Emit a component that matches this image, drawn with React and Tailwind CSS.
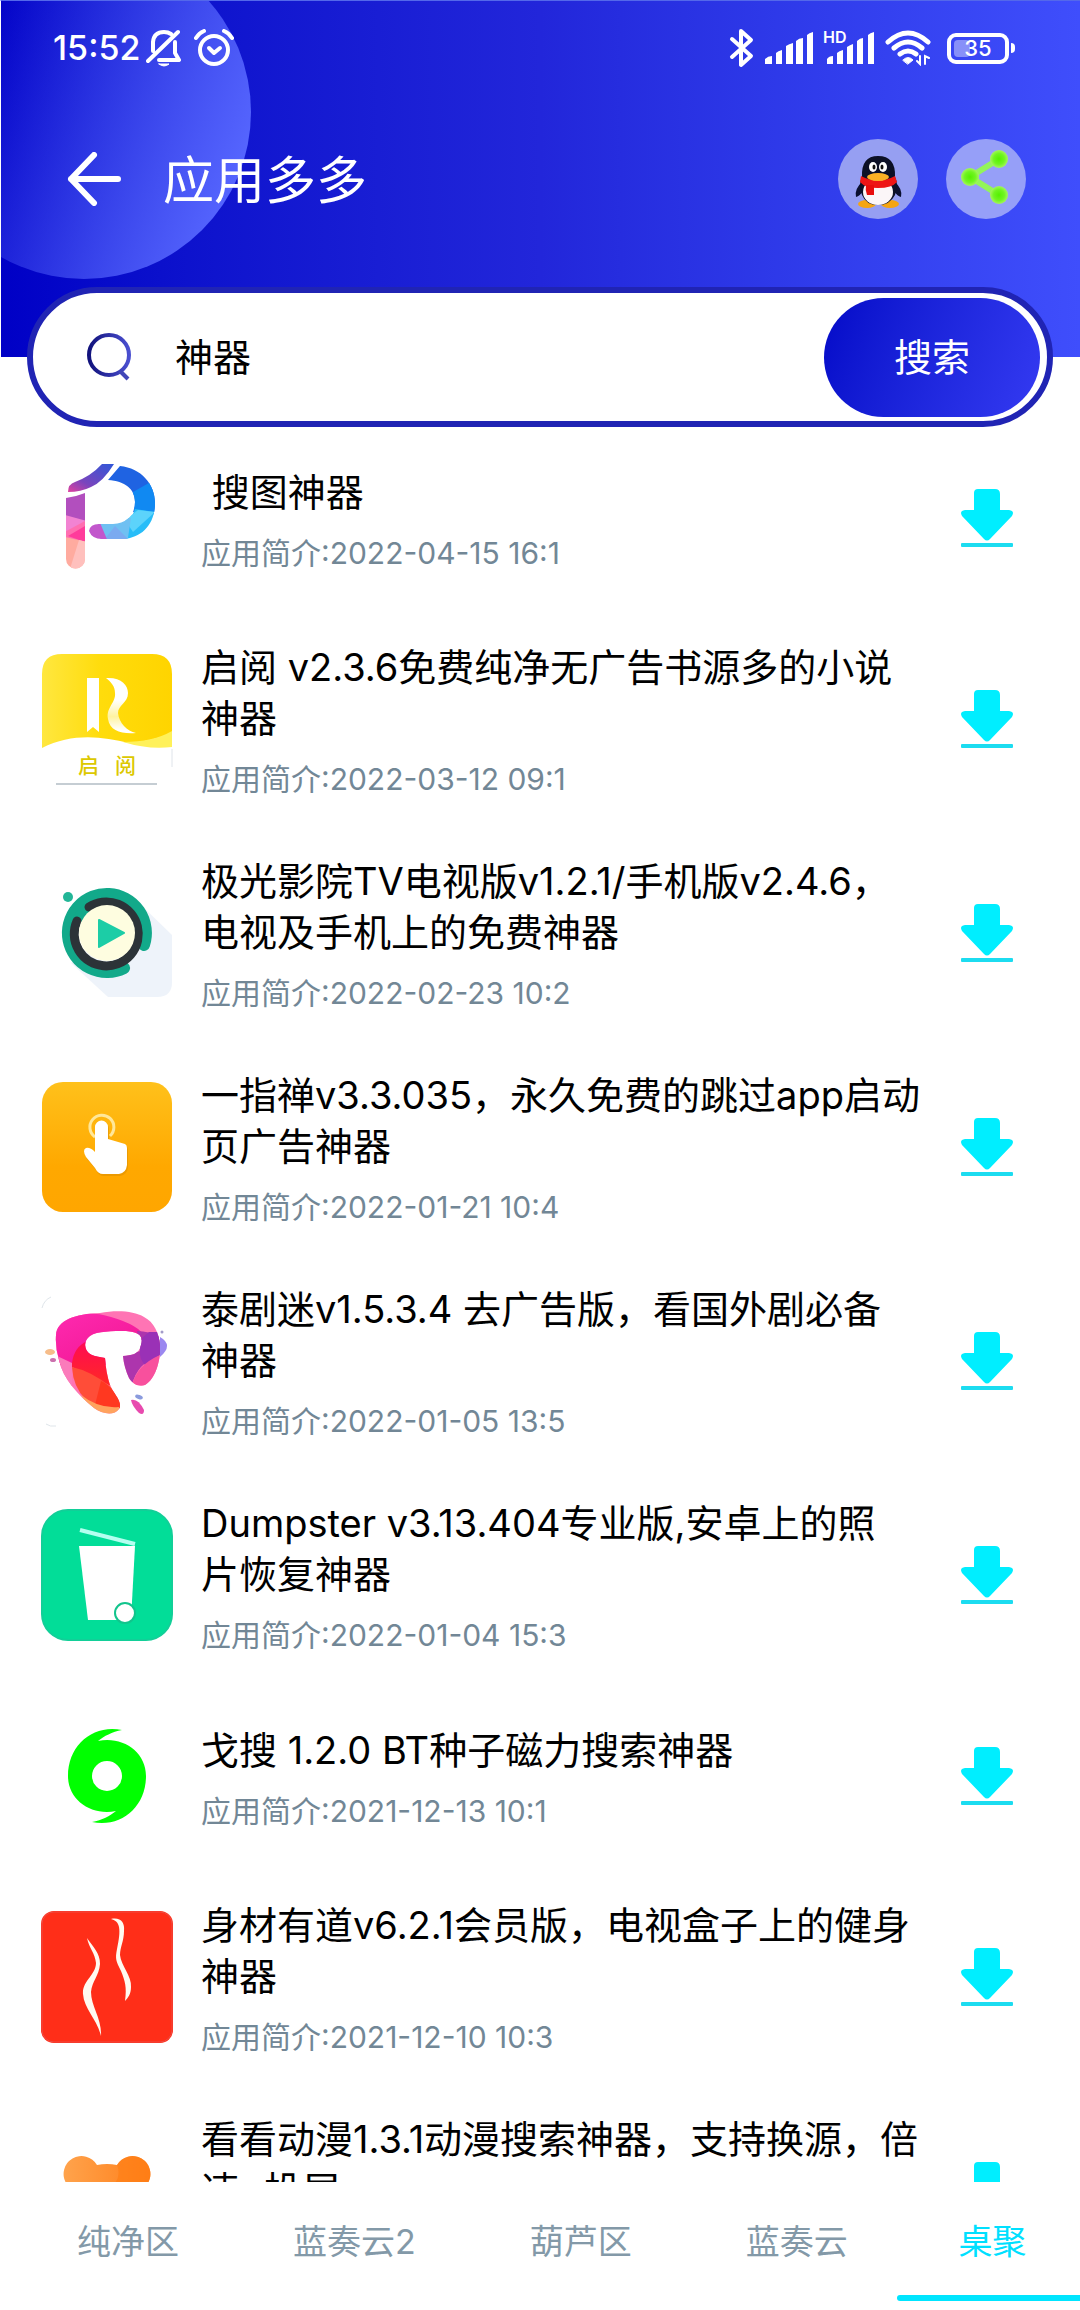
import React, { useState } from 'react'

const SearchImageIcon = () => (
  <svg viewBox="0 0 132 132" className="w-full h-full">
    <defs>
      <linearGradient id="pTop" x1="0" y1="1" x2="1" y2="0">
        <stop offset="0" stopColor="#e0419f" />
        <stop offset="0.35" stopColor="#7a45bd" />
        <stop offset="1" stopColor="#2f57d8" />
      </linearGradient>
      <clipPath id="pBar">
        <path d="M25 46Q34 45 44 41V107a9.500 9.500 0 0 1-19 0Z" />
      </clipPath>
      <clipPath id="pBowl">
        <path d="M67 28L79 14C100 16 114 32 114 51C114 72 101 86 82 87H61Q51 87 48 79Q49 72 58 72H72C87 71 94 62 94 50C94 37 84 29 67 28Z" />
      </clipPath>
    </defs>
    <path d="M27 40Q27 32 34 30Q50 24 61 12H73Q62 30 50 35Q40 40 27 40Z" fill="url(#pTop)" />
    <g clipPath="url(#pBar)">
      <path d="M20 38H50V70H20Z" fill="#b24fbe" />
      <path d="M20 62L50 70V90H20Z" fill="#f283d2" />
      <path d="M20 82L44 69V92L20 84Z" fill="#ff6fb0" />
      <path d="M27 84L44 74V90Z" fill="#ff3c9b" />
      <path d="M20 84L50 91V120H20Z" fill="#ffab9f" />
      <path d="M38 88L50 91V120H28Z" fill="#ffc0bd" />
    </g>
    <g clipPath="url(#pBowl)">
      <path d="M60 10H120V60H60Z" fill="#1f63e2" />
      <path d="M92 40L120 24V64L92 58Z" fill="#1089f2" />
      <path d="M94 57L120 61V92H80Z" fill="#27bdf8" />
      <path d="M97 58L114 60L92 80L84 68Z" fill="#5cd3fb" />
      <path d="M56 66H90L86 92H60Z" fill="#6fc0f2" />
      <path d="M74 74L92 92H60Z" fill="#7baaf0" />
      <path d="M46 66H57L68 92H46Z" fill="#c257cc" />
    </g>
  </svg>
)

const QiyueIcon = () => (
  <svg viewBox="0 0 132 132" className="w-full h-full">
    <defs>
      <linearGradient id="qyBg" x1="0" y1="0" x2="1" y2="0">
        <stop offset="0" stopColor="#ffe73f" />
        <stop offset="0.45" stopColor="#ffdc0c" />
        <stop offset="1" stopColor="#ffd400" />
      </linearGradient>
      <linearGradient id="qyTail" x1="0" y1="0" x2="0" y2="1">
        <stop offset="0.4" stopColor="#fff" />
        <stop offset="0.7" stopColor="#fff3a0" />
        <stop offset="0.95" stopColor="#fff" />
      </linearGradient>
    </defs>
    <path d="M1 95V21Q1 1 21 1H111Q131 1 131 21V80Q112 88 88 90C60 83 30 80 1 95Z" fill="url(#qyBg)" />
    <path d="M82 89Q112 89 131 78V94Q108 97 82 89Z" fill="#fff15a" />
    <path d="M46 25H58V79L52 74L46 79Z" fill="#fff" />
    <path d="M65 25C80 24 87 32 87 40C87 50 77 52 77 60C78 70 86 78 95 80C80 81 69 78 67 66C65 54 75 50 74 40C74 33 70 29 65 25Z" fill="url(#qyTail)" />
    <g fill="#dcc800" fontSize="21" fontFamily="'Noto Sans CJK SC', sans-serif" fontWeight="500">
      <text x="37" y="120">启</text>
      <text x="74" y="120">阅</text>
    </g>
    <path d="M15 131H116" stroke="#c5cdd3" strokeWidth="2" />
    <path d="M131 96V114" stroke="#dfe4ea" strokeWidth="1" />
  </svg>
)

const CinemaIcon = () => (
  <svg viewBox="0 0 132 132" className="w-full h-full">
    <path d="M100 38L131 68V115Q131 130 116 130H67L30 96Z" fill="#eef3fa" />
    <circle cx="27" cy="30" r="5" fill="#22b697" />
    <g fill="none" strokeLinecap="round">
      <path d="M83 101A39 39 0 1 1 103 78" stroke="#12a98a" strokeWidth="12" />
      <path d="M36 54A32 32 0 0 1 48 40" stroke="#12a98a" strokeWidth="10" strokeLinecap="butt" />
      <path d="M48 40A32 32 0 1 1 36 54" stroke="#2c3338" strokeWidth="9" />
    </g>
    <circle cx="66" cy="66" r="28" fill="#fefde0" />
    <path d="M58 53L83 66L58 80Z" fill="#1ccda6" stroke="#1ccda6" strokeWidth="2" strokeLinejoin="round" />
  </svg>
)

const TapIcon = () => (
  <svg viewBox="0 0 132 132" className="w-full h-full">
    <defs>
      <linearGradient id="tapBg" x1="0" y1="0" x2="0" y2="1">
        <stop offset="0" stopColor="#ffc11b" />
        <stop offset="0.65" stopColor="#ffa800" />
        <stop offset="1" stopColor="#ffa600" />
      </linearGradient>
    </defs>
    <rect x="1" y="1" width="130" height="130" rx="21" fill="url(#tapBg)" />
    <path d="M54 56A12 12 0 1 1 69 55" fill="none" stroke="#ffe79a" strokeWidth="3" />
    <path
      d="M54 46a6.500 6.500 0 0 1 13 0V58L84 63Q86 64 86 67V84Q85 92 78 93H62Q57 93 54 87L45 76Q41 69 45 67Q49 66 54 71Z"
      transform="translate(1 2)"
      fill="#d98b00"
      opacity="0.5"
    />
    <path d="M54 46a6.500 6.500 0 0 1 13 0V58L84 63Q86 64 86 67V84Q85 92 78 93H62Q57 93 54 87L45 76Q41 69 45 67Q49 66 54 71Z" fill="#fff" />
  </svg>
)

const ThaiDramaIcon = () => (
  <svg viewBox="0 0 132 132" className="w-full h-full">
    <defs>
      <clipPath id="thai">
        <path d="M15 40C16 25 34 19 59 18C76 15 93 16 103 22C113 27 118 38 119 50C120 64 115 84 104 90C98 93 91 88 88 83Q83 72 82 61C90 60 98 60 100 50C103 40 97 37 85 36C72 36 56 36 49 41C42 46 43 55 49 59C54 62 60 62 64 63Q65 78 69 90C73 99 82 107 78 114C73 121 61 119 53 113C37 100 22 84 18 65Q14 52 15 40Z" />
      </clipPath>
      <linearGradient id="thaiPink" x1="0" y1="0" x2="1" y2="1">
        <stop offset="0" stopColor="#ff2bb2" />
        <stop offset="1" stopColor="#f01590" />
      </linearGradient>
      <linearGradient id="thaiRed" x1="0" y1="0" x2="0" y2="1">
        <stop offset="0" stopColor="#ff0a55" />
        <stop offset="1" stopColor="#ff2a22" />
      </linearGradient>
    </defs>
    <g clipPath="url(#thai)">
      <path d="M0 0H132V132H0Z" fill="#ff74b4" />
      <path d="M0 40Q30 10 70 22Q98 30 104 42L70 70H10Z" fill="url(#thaiPink)" />
      <path d="M14 60L31 68V92Q20 80 14 60Z" fill="#fb7bbb" />
      <path d="M31 68Q33 52 46 46L70 62L72 92L31 72Z" fill="url(#thaiRed)" />
      <path d="M31 72Q50 76 70 92L82 114Q60 114 45 105Q32 92 31 72Z" fill="#ff4d38" />
      <path d="M60 86Q70 90 82 110V114L54 110Z" fill="#ff3820" />
      <path d="M40 100Q58 114 78 112V122H54Z" fill="#ffa35e" />
      <path d="M96 36Q108 36 119 42V60Q96 68 91 90L80 84V60L100 56Z" fill="#ad35ad" />
      <path d="M100 44L108 37H119V60L104 70Q96 62 100 44Z" fill="#9a31b6" />
      <path d="M119 60Q96 70 91 90H110Q122 78 119 60Z" fill="#f8509d" />
    </g>
    <path d="M119 42Q133 50 119 62Z" fill="#9b88f0" />
    <circle cx="121" cy="37" r="1.500" fill="#a39bc9" />
    <ellipse cx="9" cy="57" rx="5" ry="3" fill="#f6bd8a" />
    <ellipse cx="12" cy="65" rx="3" ry="2" fill="#cb70ad" />
    <ellipse cx="98" cy="102" rx="4" ry="2" transform="rotate(20 98 102)" fill="#8b9bdd" />
    <path d="M90 105Q97 103 103 115Q103 121 98 118Q91 111 90 105Z" fill="#e84aae" />
    <path d="M1 13Q3 5 10 2M5 129Q9 132 15 131" fill="none" stroke="#dfe5ea" strokeWidth="1" />
  </svg>
)

const DumpsterIcon = () => (
  <svg viewBox="0 0 132 132" className="w-full h-full">
    <rect x="1" y="1" width="130" height="130" rx="26" fill="#02dd98" stroke="#12cf98" strokeWidth="2" />
    <path d="M39 21L94 35" stroke="#b5fff0" strokeWidth="4" />
    <path d="M38 37H94L90 111H47Z" fill="#fff" />
    <circle cx="84" cy="104" r="10" fill="#fff" stroke="#12c48c" strokeWidth="2" />
  </svg>
)

const GesouIcon = () => (
  <svg viewBox="0 0 132 132" className="w-full h-full">
    <path
      d="M81 20C52 14 27 35 27 66C27 90 50 106 75 101C69 106 61 110 51 112C80 118 105 97 105 66C105 42 82 26 57 31C63 26 71 22 81 20ZM66 51a15 15 0 1 1 0 30a15 15 0 1 1 0-30Z"
      fill="#00ff00"
      fillRule="evenodd"
    />
  </svg>
)

const FitnessIcon = () => (
  <svg viewBox="0 0 132 132" className="w-full h-full">
    <rect x="0" y="0" width="132" height="132" rx="13" fill="#ff2e18" />
    <rect x="1" y="1" width="130" height="130" rx="12" fill="none" stroke="#ee4a43" strokeWidth="1" />
    <g fill="#fffaf0">
      <path d="M46 27C52 36 59 42 59 53C58 65 51 70 50 81C50 95 61 108 60 125C56 108 43 98 42 83C41 70 55 64 55 52C54 42 48 37 46 27Z" />
      <path d="M70 8C80 6 84 12 83 20C83 30 79 36 79 44C80 55 91 65 90 76C90 83 87 87 84 90C86 76 84 70 80 60C75 50 74 48 76 38C78 28 79 22 78 16C77 11 74 9 70 8Z" />
    </g>
  </svg>
)

const BearIcon = () => (
  <svg viewBox="0 0 132 132" className="w-full h-full">
    <defs>
      <linearGradient id="bear" x1="0" y1="0" x2="1" y2="0">
        <stop offset="0" stopColor="#ffa34c" />
        <stop offset="1" stopColor="#ff7f1a" />
      </linearGradient>
    </defs>
    <path
      d="M25 58A17 17 0 1 1 56 40Q66 38 76 40A17 17 0 1 1 107 58Q112 70 108 84Q100 108 66 108Q32 108 24 84Q20 70 25 58Z"
      fill="url(#bear)"
    />
    <path d="M76 40A17 17 0 1 1 107 58L74 58Q80 50 76 40Z" fill="#ff7d12" opacity="0.6" />
  </svg>
)

const DownloadIcon = () => (
  <svg viewBox="0 0 54 58" className="w-[54px] h-[58px]">
    <path
      d="M18 0H35Q40 0 40 5V21H49Q55 22 52 27L30 50Q27 53 24 50L2 27Q-1 22 5 21H14V4Q14 0 18 0Z"
      fill="#00eeff"
    />
    <rect x="1" y="54" width="52" height="4" rx="1" fill="#1cdcf0" />
  </svg>
)

const QQIcon = () => (
  <svg viewBox="0 0 80 80" className="w-20 h-20">
    <path d="M25 42Q16 50 18 58Q22 57 25 52ZM56 42Q65 50 63 58Q59 57 56 52Z" fill="#0b1030" />
    <ellipse cx="29" cy="65" rx="9" ry="4" fill="#f5a512" />
    <ellipse cx="52" cy="65" rx="9" ry="4" fill="#f5a512" />
    <path d="M24 38Q23 17 40 17Q58 17 57 38Q61 46 57 56Q52 66 40 66Q28 66 24 56Q20 46 24 38Z" fill="#0c1026" />
    <ellipse cx="40" cy="53" rx="15" ry="13" fill="#fbf6f8" />
    <path d="M23 37Q40 46 57 37L59 43Q54 49 40 49Q27 49 22 43Z" fill="#ee1515" />
    <path d="M28 46H36V56H29Q27 51 28 46Z" fill="#e80d0d" />
    <ellipse cx="40" cy="38" rx="11" ry="4" fill="#fbb124" />
    <ellipse cx="35" cy="28" rx="4" ry="5" fill="#fff" />
    <ellipse cx="45" cy="28" rx="4" ry="5" fill="#fff" />
    <ellipse cx="36" cy="28" rx="1.500" ry="2.500" fill="#111" />
    <ellipse cx="44" cy="28" rx="1.500" ry="2.500" fill="#111" />
  </svg>
)

const ShareIcon = () => (
  <svg viewBox="0 0 80 80" className="w-20 h-20">
    <defs>
      <radialGradient id="node">
        <stop offset="0" stopColor="#55f000" />
        <stop offset="0.6" stopColor="#70f520" />
        <stop offset="1" stopColor="#a5f55e" />
      </radialGradient>
    </defs>
    <path d="M53 20L24 38L53 56" fill="none" stroke="#93f55a" strokeWidth="6" strokeLinejoin="round" />
    <circle cx="53" cy="20" r="9" fill="url(#node)" />
    <circle cx="24" cy="38" r="9" fill="url(#node)" />
    <circle cx="53" cy="56" r="9" fill="url(#node)" />
  </svg>
)

const BellOffIcon = () => (
  <svg viewBox="0 0 36 38" className="w-9 h-[38px]" fill="none" stroke="#fff" strokeWidth="4" strokeLinecap="round" strokeLinejoin="round">
    <path d="M7 22V13Q8 3 18 3Q22 3 25 5M29 13V24L33 31H13M2 32L32 3" />
    <path d="M13 35H23Q18 39 13 35Z" fill="#fff" strokeWidth="1" />
  </svg>
)

const AlarmIcon = () => (
  <svg viewBox="0 0 40 38" className="w-10 h-[38px]" fill="none" stroke="#fff" strokeLinecap="round">
    <circle cx="20" cy="21" r="14" strokeWidth="4" />
    <path d="M15 19L20 24L26 19" strokeWidth="4" strokeLinejoin="round" />
    <path d="M2 9Q5 4 10 2M38 9Q35 4 30 2" strokeWidth="4" />
  </svg>
)

const BluetoothIcon = () => (
  <svg viewBox="0 0 26 40" className="w-[26px] h-10" fill="none" stroke="#fff" strokeWidth="4" strokeLinejoin="round" strokeLinecap="round">
    <path d="M3 11L22 28L12 37V3L22 12L3 29" />
  </svg>
)

const SignalIcon = () => (
  <svg viewBox="0 0 48 32" className="w-12 h-8" fill="#fff">
    <path d="M0 32V27Q3 24 7 24V32ZM11 32V21Q13 19 17 18V32ZM21 32V14Q24 12 28 11V32ZM31 32V9Q34 6 38 6V32ZM42 32V3Q44 1 48 0V32Z" />
  </svg>
)

const HdSignalIcon = () => (
  <svg viewBox="0 -7 52 46" className="w-[52px] h-[46px]" fill="#fff">
    <text x="0" y="11" fontSize="16" fontWeight="600" fontFamily="Inter, sans-serif">HD</text>
    <path d="M4 32V27Q6 24 10 24V32ZM14 32V21Q16 19 20 18V32ZM24 32V15Q27 13 30 12V32ZM34 32V9Q37 6 40 6V32ZM45 32V3Q47 1 51 0V32Z" />
  </svg>
)

const WifiIcon = () => (
  <svg viewBox="0 0 46 36" className="w-[46px] h-9" fill="none" stroke="#fff" strokeWidth="5" strokeLinecap="round">
    <path d="M3 12Q23 -6 43 12M9 18Q23 6 37 18M15 24Q23 18 31 24" />
    <path d="M18 30Q23 25 28 30L23 34Z" fill="#fff" strokeWidth="1" />
    <path d="M35 26V34L32 31M40 34V26L44 28" strokeWidth="2" />
  </svg>
)

const apps = [
  { id: 1, name: ' 搜图神器', date: '2022-04-15 16:1', Icon: SearchImageIcon },
  { id: 2, name: '启阅 v2.3.6免费纯净无广告书源多的小说神器', date: '2022-03-12 09:1', Icon: QiyueIcon },
  { id: 3, name: '极光影院TV电视版v1.2.1/手机版v2.4.6，电视及手机上的免费神器', date: '2022-02-23 10:2', Icon: CinemaIcon },
  { id: 4, name: '一指禅v3.3.035，永久免费的跳过app启动页广告神器', date: '2022-01-21 10:4', Icon: TapIcon },
  { id: 5, name: '泰剧迷v1.5.3.4 去广告版，看国外剧必备\n神器', date: '2022-01-05 13:5', Icon: ThaiDramaIcon },
  { id: 6, name: 'Dumpster v3.13.404专业版,安卓上的照\n片恢复神器', date: '2022-01-04 15:3', Icon: DumpsterIcon },
  { id: 7, name: '戈搜 1.2.0 BT种子磁力搜索神器', date: '2021-12-13 10:1', Icon: GesouIcon },
  { id: 8, name: '身材有道v6.2.1会员版，电视盒子上的健身神器', date: '2021-12-10 10:3', Icon: FitnessIcon },
  { id: 9, name: '看看动漫1.3.1动漫搜索神器，支持换源，倍速+投屏', date: '', Icon: BearIcon },
]

const tabs = ['纯净区', '蓝奏云2', '葫芦区', '蓝奏云', '桌聚']

const StatusBar = () => (
  <div className="flex items-center justify-between h-[94px] pl-[52px] pr-[65px]">
    <div className="flex items-center">
      <span className="text-[34px] leading-none font-medium">15:52</span>
      <span className="flex items-center gap-3 ml-1.5">
        <BellOffIcon />
        <AlarmIcon />
      </span>
    </div>
    <div className="flex items-center gap-2.5">
      <BluetoothIcon />
      <SignalIcon />
      <HdSignalIcon />
      <WifiIcon />
      <div className="flex items-center gap-0.5 ml-1.5">
        <div className="relative w-[62px] h-[31px] rounded-[9px] border-4 border-white flex items-center justify-center">
          <span className="absolute left-[3px] inset-y-[3px] w-4 rounded-sm bg-white/40" />
          <span className="relative text-[22px] leading-none font-medium">35</span>
        </div>
        <span className="w-1 h-[10px] rounded-r bg-white" />
      </div>
    </div>
  </div>
)

const Header = () => (
  <header className="relative overflow-hidden shrink-0 h-[357px] text-white border-t border-l border-t-[#5468ea] border-l-white bg-linear-to-r from-[#0000c6] via-[#2226da] to-[#3f4efc]">
    <div className="absolute -left-[84px] -top-[56px] size-[334px] rounded-full bg-linear-110 from-transparent from-20% to-[#5666ff] to-90%" />
    <div className="relative">
      <StatusBar />
      <div className="flex items-center pl-[66px] pr-[54px] pt-11">
        <button type="button" aria-label="返回">
          <svg viewBox="0 0 54 54" className="w-[54px] h-[54px]" fill="none" stroke="#fff" strokeWidth="6" strokeLinecap="round" strokeLinejoin="round">
            <path d="M27 3L4 27L27 51M4 27H51" />
          </svg>
        </button>
        <h1 className="flex-1 ml-[42px] pt-1 text-[51px] leading-[76px]">应用多多</h1>
        <div className="flex gap-7">
          <button type="button" aria-label="QQ" className="size-20 rounded-full bg-[#969ff2]">
            <QQIcon />
          </button>
          <button type="button" aria-label="分享" className="size-20 rounded-full bg-[#969ff8]">
            <ShareIcon />
          </button>
        </div>
      </div>
    </div>
  </header>
)

const SearchBar = () => {
  const [keyword, setKeyword] = useState('神器')

  return (
    <form
      onSubmit={(e) => e.preventDefault()}
      className="relative z-10 shrink-0 flex items-center h-[140px] -mt-[70px] mx-[27px] pl-[54px] pr-[7px] rounded-full border-6 border-[#2024b4] bg-white"
    >
      <svg viewBox="0 0 44 48" className="w-11 h-12" fill="none" strokeWidth="4">
        <defs>
          <linearGradient id="lens" x1="0" y1="0" x2="1" y2="0">
            <stop offset="0" stopColor="#11127c" />
            <stop offset="1" stopColor="#4a4fd0" />
          </linearGradient>
        </defs>
        <circle cx="22" cy="22" r="20" stroke="url(#lens)" />
        <path d="M33 38L41 46" stroke="#4146b8" />
      </svg>
      <input
        type="text"
        aria-label="搜索关键词"
        value={keyword}
        onChange={(e) => setKeyword(e.target.value)}
        className="flex-1 min-w-0 ml-11 text-[38px] leading-[52px] text-black outline-none"
      />
      <button
        type="submit"
        className="w-[216px] h-[119px] rounded-full text-[38px] text-white bg-linear-110 from-[#0408c8] to-[#343af2]"
      >
        搜索
      </button>
    </form>
  )
}

const AppRow = ({ app }) => {
  const { name, date, Icon } = app

  return (
    <li className="flex items-center py-7 pl-[41px] pr-[66px]">
      <div className="size-[132px] shrink-0">
        <Icon />
      </div>
      <div className="flex-1 min-w-0 ml-7 mr-9 pt-0.5">
        <h2 className="text-[38px] leading-[51px] text-black whitespace-pre-wrap">{name}</h2>
        <p className="mt-4 min-h-[38px] text-[30px] leading-[38px] text-[#728796]">
          {date && `应用简介:${date}`}
        </p>
      </div>
      <button type="button" aria-label="下载" className="shrink-0">
        <DownloadIcon />
      </button>
    </li>
  )
}

const TabBar = () => {
  const [active, setActive] = useState('桌聚')

  return (
    <nav className="shrink-0 h-32 pl-5 flex items-start bg-white">
      {tabs.map((tab) => (
        <button
          key={tab}
          type="button"
          onClick={() => setActive(tab)}
          className={`relative h-[119px] px-[57px] text-[34px] whitespace-nowrap last:flex-1 last:px-0 ${
            tab === active ? 'text-[#00e0ff]' : 'text-[#8399a8]'
          }`}
        >
          {tab}
          {tab === active && <span className="absolute -left-2 right-0 bottom-0 h-[6px] rounded-l-full bg-[#00e5ff]" />}
        </button>
      ))}
    </nav>
  )
}

const App = () => {
  return (
    <div className="h-screen flex flex-col overflow-hidden bg-white font-[Inter,'Noto_Sans_CJK_SC',sans-serif]">
      <Header />
      <SearchBar />
      <ul className="flex-1 min-h-0 -mt-[3px] overflow-y-auto [scrollbar-width:none]">
        {apps.map((app) => (
          <AppRow key={app.id} app={app} />
        ))}
      </ul>
      <TabBar />
    </div>
  )
}

export default App
